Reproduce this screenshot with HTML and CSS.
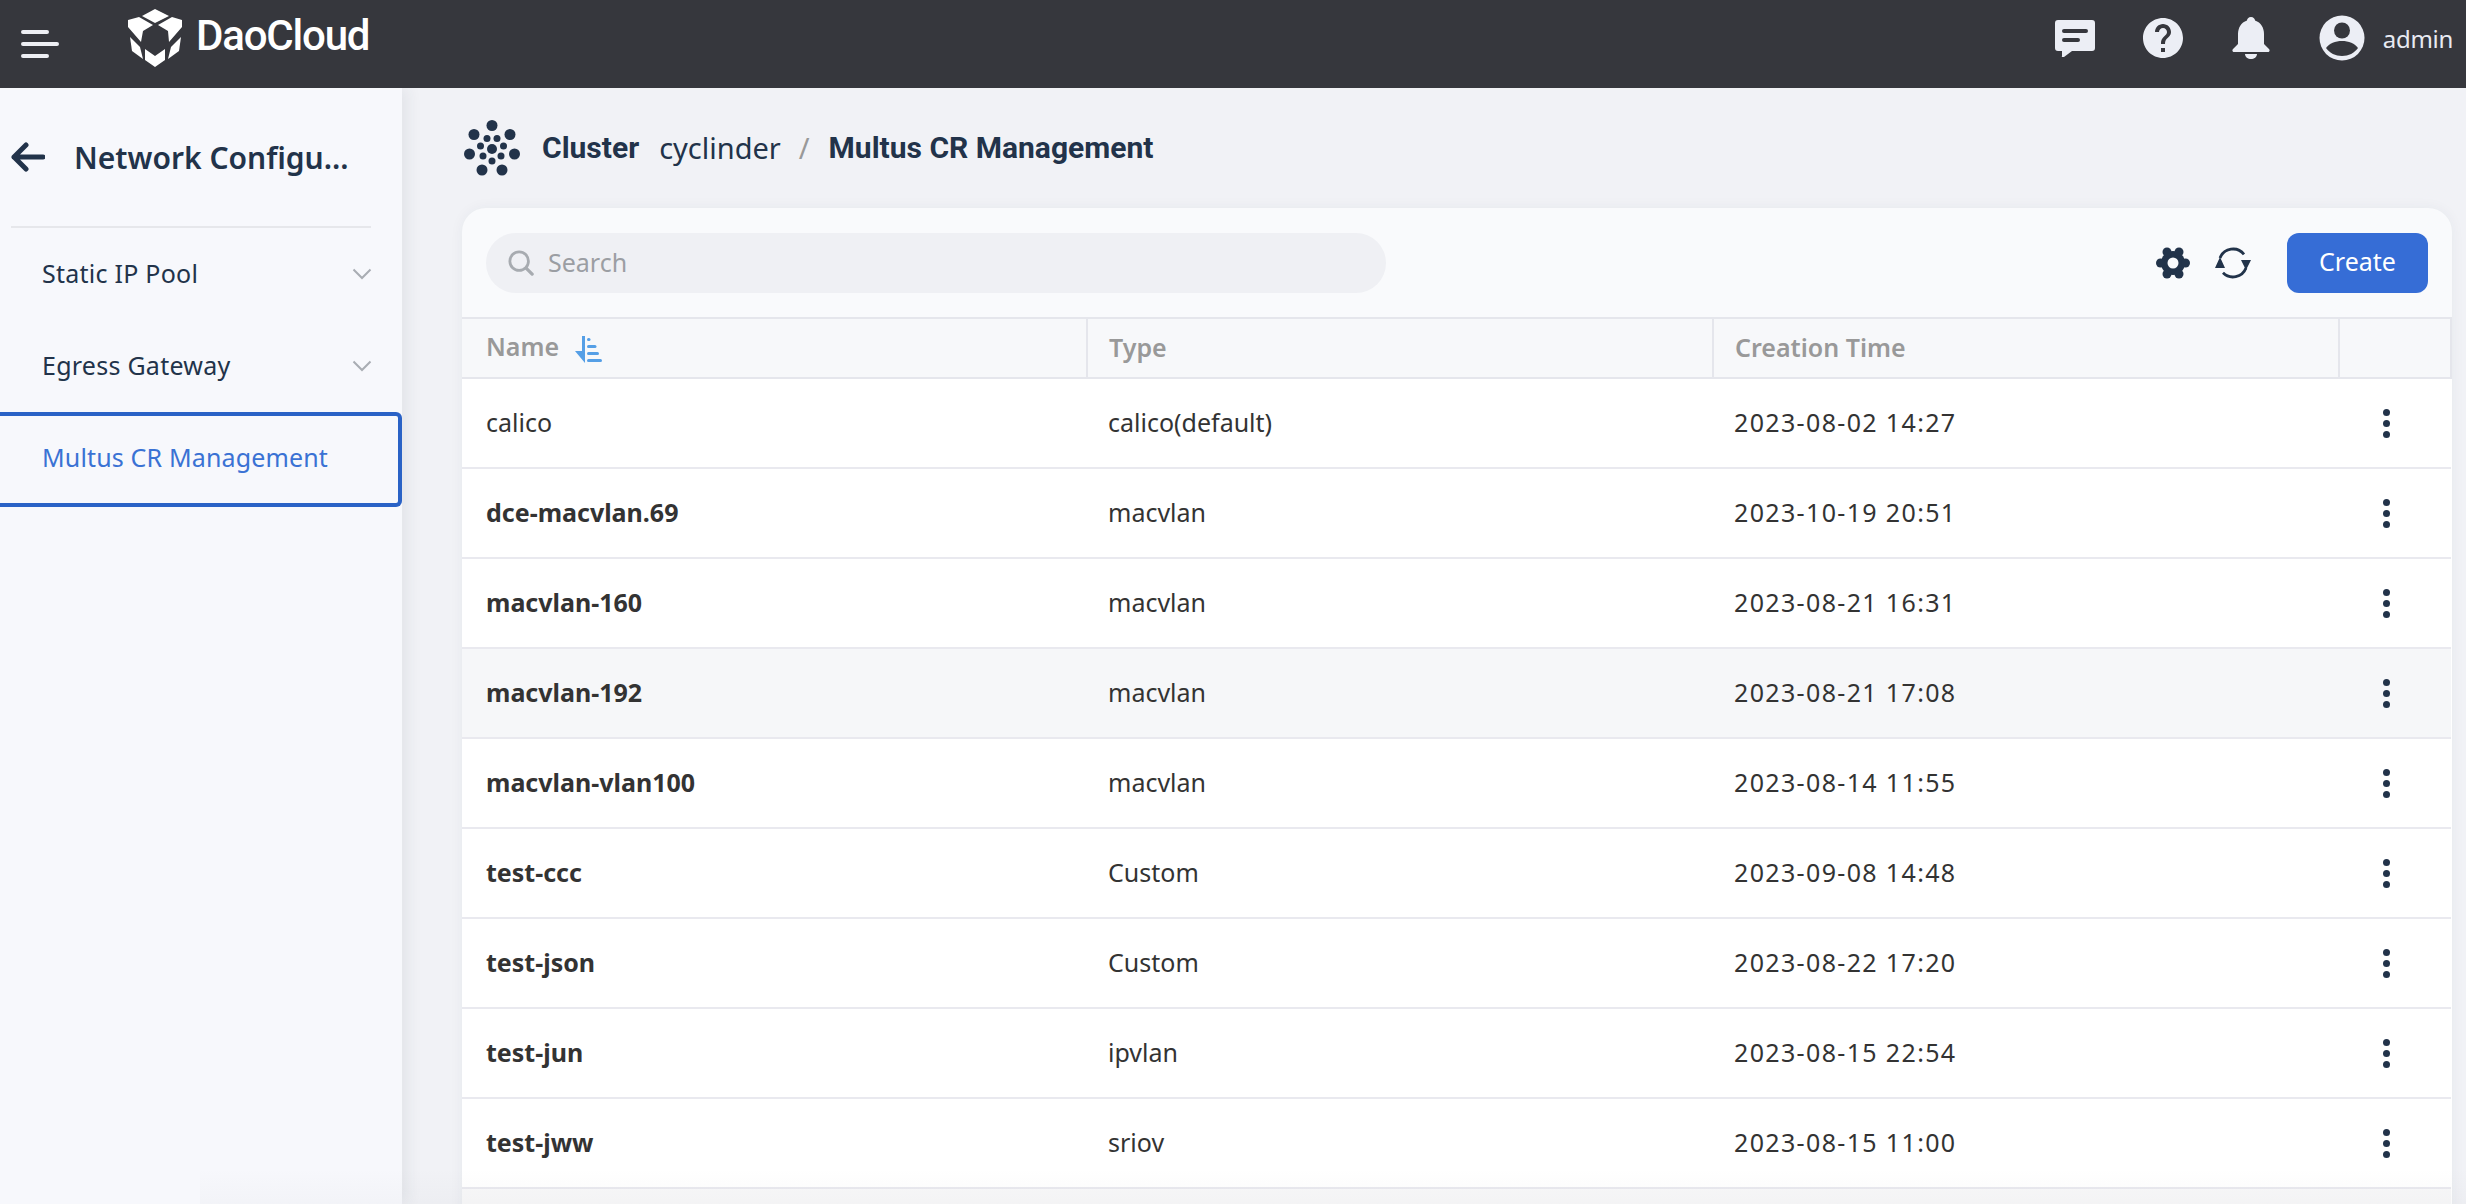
FILE: index.html
```html
<!DOCTYPE html>
<html lang="en">
<head>
  <meta charset="UTF-8" />
  <title>Multus CR Management</title>
  <link rel="stylesheet" href="styles.css">
</head>
<body>

  <header class="topbar">
    <svg class="menu-icon" viewBox="0 0 36 28" width="36" height="28">
      <path d="M2 2h24M2 14h34M2 26h24" stroke="#eeeff4" stroke-width="4" stroke-linecap="round" fill="none" transform="translate(-1 0)"/>
    </svg>
    <div class="logo">
      <svg viewBox="0 0 55 58" width="55" height="58">
        <g fill="#fff">
          <polygon points="27,0 41,7 27,14 14,7"/>
          <polygon points="0,11 11,8 25,16 15,22 13,33 0,18"/>
          <polygon points="54,11 44,8 30,16 40,22 41,33 54,18"/>
          <polygon points="2,28 12,38 15,50 4,42"/>
          <polygon points="53,28 43,38 40,50 51,42"/>
          <polygon points="17,40 27,47 37,40 37,51 27,58 17,51"/>
        </g>
      </svg>
      <span class="logo-text">DaoCloud</span>
    </div>
    <div class="topbar-right">
      <svg class="top-icon chat" viewBox="0 0 40 37" width="40" height="37">
        <path fill="#eceef5" fill-rule="evenodd" d="M3 0h34a3 3 0 0 1 3 3v25a3 3 0 0 1-3 3H17l-8 6a1 1 0 0 1-2-1v-5H3a3 3 0 0 1-3-3V3a3 3 0 0 1 3-3zM9 9a2 2 0 0 0 0 4h22a2 2 0 0 0 0-4zM9 18a2 2 0 0 0 0 4h14a2 2 0 0 0 0-4z"/>
      </svg>
      <svg class="top-icon help" viewBox="2 2 20 20" width="40" height="40">
        <path fill="#eceef5" d="M12 2C6.48 2 2 6.48 2 12s4.48 10 10 10 10-4.48 10-10S17.52 2 12 2zm1 17h-2v-2h2v2zm2.07-7.75l-.9.92C13.45 12.9 13 13.5 13 15h-2v-.5c0-1.1.45-2.1 1.17-2.83l1.24-1.26c.37-.36.59-.86.59-1.41 0-1.1-.9-2-2-2s-2 .9-2 2H8c0-2.21 1.79-4 4-4s4 1.79 4 4c0 .88-.36 1.68-.93 2.25z"/>
      </svg>
      <svg class="top-icon bell" viewBox="0 0 38 42" width="38" height="42">
        <path fill="#eceef5" d="M19 0c2.500 0 4 2 4 3.500C29 5.500 32 11 32 17v10l5 5c1.200 1.300.5 3-1 3H2c-1.500 0-2.200-1.700-1-3l5-5V17c0-6 3-11.500 9-13.500C15 2 16.500 0 19 0zM13 37h12c0 3-3 5-6 5s-6-2-6-5z"/>
      </svg>
      <svg class="top-icon avatar" viewBox="0 0 46 46" width="46" height="46">
        <circle cx="23" cy="23" r="22.500" fill="#eceef5"/>
        <circle cx="23" cy="15.500" r="8" fill="#36373d"/>
        <path fill="#36373d" d="M7 33c3-4.500 9.500-7 16-7s13 2.500 16 7c-3.500 5-9.500 8-16 8s-12.500-3-16-8z"/>
      </svg>
      <span class="user-name">admin</span>
    </div>
  </header>

  <div class="layout">
    <aside class="sidebar">
      <div class="side-title">
        <svg viewBox="0 0 34 30" width="34" height="30">
          <path d="M32 15H3M15 3L3 15l12 12" stroke="#22334a" stroke-width="5" stroke-linecap="round" stroke-linejoin="round" fill="none"/>
        </svg>
        <span>Network Configu...</span>
      </div>
      <ul class="side-menu">
        <li class="side-item"><span>Static IP Pool</span>
          <svg viewBox="0 0 20 12" width="20" height="12"><path d="M1.500 1.500L10 10l8.500-8.500" stroke="#a9adb3" stroke-width="2" fill="none"/></svg>
        </li>
        <li class="side-item"><span>Egress Gateway</span>
          <svg viewBox="0 0 20 12" width="20" height="12"><path d="M1.500 1.500L10 10l8.500-8.500" stroke="#a9adb3" stroke-width="2" fill="none"/></svg>
        </li>
        <li class="side-item active"><span>Multus CR Management</span></li>
      </ul>
    </aside>

    <main class="content">
      <div class="breadcrumb">
        <svg class="cluster-icon" viewBox="0 0 56 56" width="56" height="56" fill="#22334a">
          <circle cx="28" cy="5.500" r="5.500"/>
          <circle cx="10" cy="14.500" r="5.500"/><circle cx="46" cy="14.500" r="5.500"/>
          <circle cx="5.500" cy="34" r="5.500"/><circle cx="50.500" cy="34" r="5.500"/>
          <circle cx="18" cy="50" r="5.500"/><circle cx="38" cy="50" r="5.500"/>
          <circle cx="23" cy="18.500" r="3.500"/><circle cx="33" cy="18.500" r="3.500"/>
          <circle cx="16.500" cy="26" r="3.500"/><circle cx="39.500" cy="26" r="3.500"/>
          <circle cx="19" cy="36" r="3.500"/><circle cx="37" cy="36" r="3.500"/>
          <circle cx="28" cy="41" r="3.500"/><circle cx="28" cy="29" r="5"/>
        </svg>
        <span class="crumb-strong">Cluster</span>
        <span class="crumb-link">cyclinder</span>
        <span class="crumb-sep">/</span>
        <span class="crumb-strong">Multus CR Management</span>
      </div>

      <section class="card">
        <div class="toolbar">
          <div class="search-box">
            <svg viewBox="0 0 28 28" width="26" height="26">
              <circle cx="12" cy="12" r="10" stroke="#a7abb0" stroke-width="3" fill="none"/>
              <path d="M19.500 19.500L26 26" stroke="#a7abb0" stroke-width="3.500" stroke-linecap="round"/>
            </svg>
            <span>Search</span>
          </div>
          <div class="toolbar-right">
            <svg class="gear" viewBox="0 0 34 32" width="34" height="32">
              <g fill="#22334a">
                <circle cx="17" cy="16" r="12"/>
                <circle cx="11" cy="5" r="4.500"/><circle cx="23" cy="5" r="4.500"/>
                <circle cx="4.500" cy="16" r="4.500"/><circle cx="29.500" cy="16" r="4.500"/>
                <circle cx="11" cy="27" r="4.500"/><circle cx="23" cy="27" r="4.500"/>
              </g>
              <circle cx="17" cy="16" r="5.500" fill="#f9fafc"/>
            </svg>
            <svg class="refresh" viewBox="0 0 36 32" width="36" height="32">
              <path d="M5 11A14 14 0 0 1 29 7.300M31 21A14 14 0 0 1 8 25.800" stroke="#22334a" stroke-width="2.800" fill="none"/>
              <path fill="#22334a" d="M0 21h10L5 10zM26 13h10l-5 10z"/>
            </svg>
            <button class="create-btn"><span>Create</span></button>
          </div>
        </div>

        <table class="cr-table">
          <colgroup>
            <col class="col-name"><col class="col-type"><col class="col-time"><col>
          </colgroup>
          <thead>
            <tr>
              <th>Name
                <svg class="sort-icon" viewBox="0 0 28 28" width="28" height="28" fill="#559fe6">
                  <path d="M7 0h3v27L0 15h7z"/>
                  <rect x="12" y="2" width="3.500" height="3" rx="1.500"/>
                  <rect x="12" y="9" width="9.500" height="3" rx="1.500"/>
                  <rect x="12" y="16" width="12" height="3" rx="1.500"/>
                  <rect x="12" y="23" width="15" height="3" rx="1.500"/>
                </svg>
              </th>
              <th>Type</th>
              <th>Creation Time</th>
              <th></th>
            </tr>
          </thead>
          <tbody id="rows"></tbody>
        </table>
      </section>
    </main>
  </div>

  <script>
    var data = [
      ["calico", "calico(default)", "2023-08-02 14:27", false],
      ["dce-macvlan.69", "macvlan", "2023-10-19 20:51", true],
      ["macvlan-160", "macvlan", "2023-08-21 16:31", true],
      ["macvlan-192", "macvlan", "2023-08-21 17:08", true],
      ["macvlan-vlan100", "macvlan", "2023-08-14 11:55", true],
      ["test-ccc", "Custom", "2023-09-08 14:48", true],
      ["test-json", "Custom", "2023-08-22 17:20", true],
      ["test-jun", "ipvlan", "2023-08-15 22:54", true],
      ["test-jww", "sriov", "2023-08-15 11:00", true]
    ];
    var rows = document.getElementById("rows");
    data.forEach(function (d) {
      var tr = document.createElement("tr");
      if (d[0] === "macvlan-192") tr.className = "hover";
      tr.innerHTML =
        '<td class="' + (d[3] ? "name-link" : "") + '">' + d[0] + "</td>" +
        '<td>' + d[1] + '</td><td class="time">' + d[2] + "</td>" +
        '<td class="dots"><span></span><span></span><span></span></td>';
      rows.appendChild(tr);
    });
    var last = document.createElement("tr");
    last.className = "last-row";
    last.innerHTML = '<td colspan="4"></td>';
    rows.appendChild(last);
  </script>

</body>
</html>
```

FILE: styles.css
```css
html, body {
  margin: 0;
  height: 100%;
  overflow: hidden;
}

body {
  font-family: 'Noto Sans', 'Open Sans', sans-serif;
  font-size: 25px;
  color: #22334a;
  background-color: #f1f2f6;
}

.topbar {
  display: flex;
  align-items: center;
  height: 88px;
  background-color: #36373d;
  padding-left: 22px;
  padding-right: 13px;
  box-sizing: border-box;
}

.menu-icon {
  margin-right: 70px;
  overflow: visible;
}

.logo {
  display: flex;
  align-items: center;
  gap: 13px;
  margin-bottom: 12px;
}

.logo-text {
  font-family: 'Roboto', sans-serif;
  font-size: 42px;
  font-weight: 500;
  letter-spacing: -1.2px;
  line-height: 1;
  color: #fff;
  margin-bottom: 4px;
}

.topbar-right {
  display: flex;
  align-items: center;
  margin-left: auto;
  margin-top: -12px;
}

.top-icon.chat { margin-right: 48px; }
.top-icon.help { margin-right: 49px; }
.top-icon.bell { margin-right: 49px; }
.top-icon.avatar { margin-right: 18px; }

.user-name {
  font-size: 24px;
  letter-spacing: -0.3px;
  color: #e8eaf2;
}

.layout {
  position: relative;
  display: flex;
  height: calc(100vh - 88px);
  overflow: hidden;
}

/* soft fade along the bottom edge */
.layout::after {
  content: "";
  position: absolute;
  left: 200px;
  right: 0;
  bottom: 0;
  height: 36px;
  background: linear-gradient(rgba(60, 60, 70, 0), rgba(60, 60, 70, 0.025));
  pointer-events: none;
}

.sidebar {
  width: 402px;
  flex-shrink: 0;
  background-color: #f7f8fc;
  box-shadow: 6px 0 14px rgba(40, 50, 70, 0.07);
}

.side-title {
  display: flex;
  align-items: center;
  gap: 29px;
  height: 138px;
  margin-left: 11px;
  width: 360px;
  border-bottom: 2px solid #e6e7eb;
  font-size: 30px;
  font-weight: 600;
  white-space: nowrap;
}

.side-menu {
  list-style: none;
  margin: 0;
  padding: 0;
}

.side-item {
  display: flex;
  align-items: center;
  justify-content: space-between;
  height: 92px;
  padding: 0 30px 0 42px;
  box-sizing: border-box;
}

.side-item span {
  margin-bottom: 3px;
  letter-spacing: 0.25px;
}

.side-item.active {
  height: 95px;
  border: 4px solid #2a62c6;
  border-left: none;
  border-radius: 0 6px 6px 0;
  color: #3a72d4;
}

.side-item.active span {
  margin-bottom: 5px;
  letter-spacing: 0.15px;
}

.content {
  flex: 1;
  min-width: 0;
  padding: 0 14px 0 60px;
  overflow: hidden;
}

.breadcrumb {
  display: flex;
  align-items: center;
  height: 120px;
  font-size: 29px;
}

.breadcrumb span {
  margin-bottom: 2px;
}

.cluster-icon {
  margin-right: 22px;
  margin-left: 2px;
}

.crumb-strong {
  font-family: 'Roboto', sans-serif;
  font-weight: 700;
  font-size: 30px;
}

.crumb-link {
  margin-left: 20px;
}

.crumb-sep {
  margin: 0 19px 2px 18px;
  color: #999;
}

.card {
  background-color: #f9fafc;
  border-radius: 24px 24px 0 0;
  box-shadow: 0 0 14px rgba(40, 50, 70, 0.05);
  overflow: hidden;
}

.toolbar {
  display: flex;
  align-items: center;
  justify-content: space-between;
  height: 109px;
  padding: 0 24px;
  box-sizing: border-box;
}

.search-box {
  display: flex;
  align-items: center;
  gap: 14px;
  width: 900px;
  height: 60px;
  padding-left: 22px;
  box-sizing: border-box;
  border-radius: 30px;
  background-color: #eff0f4;
  color: #9b9ea3;
}

.search-box span {
  margin-bottom: 2px;
}

.toolbar-right {
  display: flex;
  align-items: center;
}

.gear {
  margin-left: 2px;
  margin-right: -2px;
}

.refresh {
  margin-left: 27px;
  margin-right: 36px;
}

.create-btn {
  width: 141px;
  height: 60px;
  padding: 0 0 3px;
  border: none;
  border-radius: 12px;
  background-color: #366dd6;
  color: #fff;
  font-family: inherit;
  font-size: 25px;
  cursor: pointer;
}

.cr-table {
  width: 100%;
  border-collapse: collapse;
  table-layout: fixed;
  background-color: #fff;
}

.col-name { width: 625px; }
.col-type { width: 626px; }
.col-time { width: 626px; }

.cr-table th {
  height: 60px;
  padding: 0 24px 3px 21px;
  box-sizing: border-box;
  background-color: #f7f8fa;
  border-top: 2px solid #e5e6ec;
  border-bottom: 2px solid #e5e6ec;
  border-right: 2px solid #e5e6ec;
  color: #999;
  font-weight: 600;
  text-align: left;
}

.cr-table th:first-child { padding-left: 24px; }

.sort-icon {
  vertical-align: middle;
  margin-left: 9px;
}

.cr-table td {
  height: 90px;
  padding: 0 24px 3px 21px;
  box-sizing: border-box;
  border-bottom: 2px solid #e9e9ef;
  color: #333;
}

.cr-table td:first-child { padding-left: 24px; }

.name-link {
  font-weight: 700;
}

.cr-table .time {
  letter-spacing: 1.35px;
}

.hover td {
  background-color: #f6f7f9;
}

.cr-table .dots {
  padding: 0 0 0 44px;
}

.dots span {
  display: block;
  width: 7px;
  height: 7px;
  margin: 4px 0;
  border-radius: 50%;
  background-color: #22334a;
}

.last-row td {
  background-color: #f8f8f9;
}
```
